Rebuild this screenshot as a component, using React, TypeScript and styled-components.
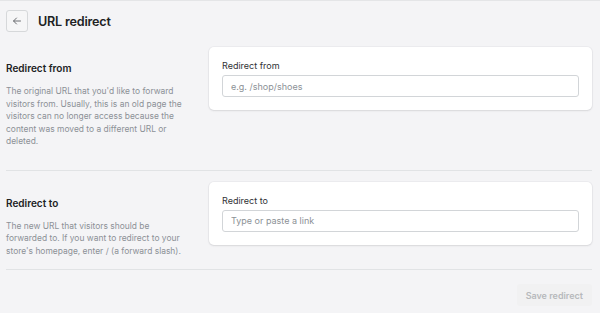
import styled, { createGlobalStyle } from 'styled-components';

const GlobalStyle = createGlobalStyle`
  html, body {
    margin: 0;
    padding: 0;
    background: #f4f4f6;
  }
  body {
    font-family: Inter, "Noto Sans", "Liberation Sans", sans-serif;
    color: #202223;
    -webkit-font-smoothing: antialiased;
  }
`;

type Section = {
  title: string;
  description: string;
  label: string;
  placeholder: string;
  bottomSpace: number;
};

const sections: Section[] = [
  {
    title: 'Redirect from',
    description:
      "The original URL that you'd like to forward visitors from. Usually, this is an old page the visitors can no longer access because the content was moved to a different URL or deleted.",
    label: 'Redirect from',
    placeholder: 'e.g. /shop/shoes',
    bottomSpace: 22,
  },
  {
    title: 'Redirect to',
    description:
      "The new URL that visitors should be forwarded to. If you want to redirect to your store's homepage, enter / (a forward slash).",
    label: 'Redirect to',
    placeholder: 'Type or paste a link',
    bottomSpace: 12,
  },
];

/** URL redirect creation page */
export default function App() {
  return (
    <>
      <GlobalStyle />
      <Page>
        <Header>
          <BackButton aria-label="Back">
            <svg width="10" height="10" viewBox="0 0 20 20" fill="none">
              <path d="M17 10H3.5M9 4l-6 6 6 6" stroke="#5c5f62" strokeWidth="1.8" strokeLinecap="round" strokeLinejoin="round" />
            </svg>
          </BackButton>
          <Title>URL redirect</Title>
        </Header>

        {sections.map((section) => (
          <LayoutSection key={section.title} bottomSpace={section.bottomSpace}>
            <Annotation>
              <AnnotationTitle>{section.title}</AnnotationTitle>
              <AnnotationText>{section.description}</AnnotationText>
            </Annotation>
            <Card>
              <FieldLabel>{section.label}</FieldLabel>
              <TextInput placeholder={section.placeholder} />
            </Card>
          </LayoutSection>
        ))}

        <Footer>
          <SaveButton disabled>Save redirect</SaveButton>
        </Footer>
      </Page>
    </>
  );
}

const Page = styled.div`
  min-height: 313px;
  box-sizing: border-box;
  border-top: 1px solid #e4e5e7;
  padding: 0 8px 0 6px;
`;

const Header = styled.div`
  display: flex;
  align-items: center;
  gap: 10px;
  height: 40px;
`;

const BackButton = styled.button`
  width: 22px;
  height: 22px;
  padding: 0;
  display: flex;
  align-items: center;
  justify-content: center;
  background: #f6f6f7;
  border: 1px solid #d6d8da;
  border-radius: 3px;
  cursor: pointer;
`;

const Title = styled.h1`
  margin: 0;
  font-size: 12.6px;
  font-weight: 600;
  letter-spacing: -0.2px;
  color: #202223;
`;

const LayoutSection = styled.div<{ bottomSpace: number }>`
  display: grid;
  grid-template-columns: 186px 1fr;
  column-gap: 17px;
  align-items: start;
  padding: 6px 0 ${(props) => props.bottomSpace}px;
  border-bottom: 1px solid #e1e3e5;

  & + & {
    padding-top: 11px;
  }
`;

const Annotation = styled.div`
  padding-top: 15px;
`;

const AnnotationTitle = styled.h2`
  margin: 0 0 11px;
  font-size: 10px;
  font-weight: 600;
  color: #202223;
`;

const AnnotationText = styled.p`
  margin: 0;
  font-size: 8.45px;
  line-height: 12.5px;
  color: #8c9196;
`;

const Card = styled.div`
  background: #ffffff;
  border-radius: 5px;
  box-shadow: 0 0 0 1px rgba(63, 63, 68, 0.04), 0 1px 2px rgba(63, 63, 68, 0.12);
  padding: 13px;
`;

const FieldLabel = styled.label`
  display: block;
  font-size: 9px;
  line-height: 12px;
  margin-bottom: 3px;
  color: #303235;
`;

const TextInput = styled.input`
  display: block;
  box-sizing: border-box;
  width: 100%;
  height: 22px;
  padding: 0 8px;
  border: 1px solid #d2d5d8;
  border-radius: 3px;
  font-family: inherit;
  font-size: 9px;
  color: #202223;
  background: #ffffff;
  outline: none;

  &::placeholder {
    color: #8c9196;
  }
`;

const Footer = styled.div`
  display: flex;
  justify-content: flex-end;
  padding-top: 14px;
`;

const SaveButton = styled.button`
  height: 22px;
  padding: 0 9px;
  border: none;
  border-radius: 3px;
  background: #f1f1f2;
  color: #b7b9bc;
  font-family: inherit;
  font-size: 9px;
  font-weight: 600;
`;
